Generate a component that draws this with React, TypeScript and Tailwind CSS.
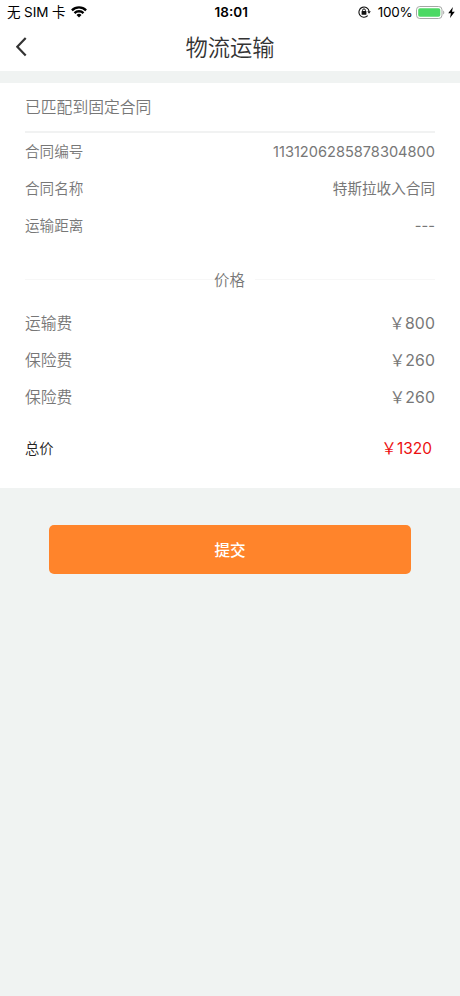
import React from "react";

type RowProps = { label: string; value: string };

const YEN = "\uFFE5";

function DetailRow({ label, value }: RowProps) {
  return (
    <div className="flex h-[36.8px] items-center justify-between text-[14.6px] whitespace-nowrap">
      <span>{label}</span>
      <span className="font-normal">{value}</span>
    </div>
  );
}

function PriceRow({ label, value }: RowProps) {
  return (
    <div className="flex h-[36.8px] items-center justify-between text-[15.8px] whitespace-nowrap">
      <span>{label}</span>
      <span className="font-normal tracking-[0.1px]">{YEN}{value}</span>
    </div>
  );
}

function WifiIcon() {
  return (
    <svg className="ml-[6px] h-[12px] w-[16px]" viewBox="0 0 16 12" fill="none" stroke="#000" strokeWidth="2.4">
      <path d="M.9 4.3a10.2 10.2 0 0 1 14.2 0" />
      <path d="M3.5 7.1a6.5 6.5 0 0 1 9 0" />
      <path d="M8 11.5 5.5 9a3.6 3.6 0 0 1 5 0Z" fill="#000" stroke="none" />
    </svg>
  );
}

function RotationLockIcon() {
  return (
    <svg className="h-[12px] w-[13px]" viewBox="0 0 13 12" fill="none" stroke="#111">
      <path d="M9.7 9.7A5.1 5.1 0 1 1 11.1 5.4" strokeWidth="1.1" />
      <path d="M9.3 5.3h3.5L11 7.7Z" fill="#111" stroke="none" />
      <rect x="3.6" y="5.1" width="4.8" height="3.7" rx=".5" fill="#111" stroke="none" />
      <path d="M4.6 5.4V4.3a1.4 1.4 0 0 1 2.8 0v1.1" strokeWidth="1" />
    </svg>
  );
}

function BatteryIcon() {
  return (
    <svg className="ml-[3px] h-[13px] w-[29px]" viewBox="0 0 29 13" fill="none">
      <rect x=".5" y=".5" width="25.5" height="12" rx="3.3" stroke="#a5a8a5" />
      <rect x="2.2" y="2.2" width="22.1" height="8.6" rx="1.8" fill="#4cd964" />
      <path d="M27.2 4.5c1.5.5 1.5 3.5 0 4Z" fill="#a5a8a5" />
    </svg>
  );
}

function StatusBar() {
  return (
    <header className="grid h-6 grid-cols-[1fr_60px_1fr] items-center pr-[5.5px] pl-[7px] text-[13.5px] text-black">
      <div className="flex items-center whitespace-nowrap">
        <span className="tracking-[-0.1px]">无 SIM 卡</span>
        <WifiIcon />
      </div>
      <span className="pl-px text-center font-semibold">18:01</span>
      <div className="flex items-center justify-end whitespace-nowrap">
        <RotationLockIcon />
        <span className="ml-[7px] tracking-[-0.25px]">100%</span>
        <BatteryIcon />
        <svg className="ml-[3px] h-[11px] w-[7px]" viewBox="0 0 7 11" fill="#000">
          <path d="M4.9 0 .2 6.2h2.7L2 11l4.8-6.3H4Z" />
        </svg>
      </div>
    </header>
  );
}

export default function App() {
  return (
    <div className="flex h-[996px] w-[460px] flex-col overflow-hidden bg-[#f0f3f2] font-['Inter','Noto_Sans_CJK_SC',sans-serif] text-[#777]">
      <div className="h-[71px] bg-white">
        <StatusBar />
        <nav className="grid h-[46px] grid-cols-[60px_1fr_60px] items-center text-[#333]">
          <svg className="ml-4 h-[20px] w-[11px]" viewBox="0 0 11 20" fill="none" stroke="#333" strokeWidth="2.2">
            <path d="m9.7 1.1-8.4 8.7 8.4 8.7" />
          </svg>
          <h1 className="pt-[2px] text-center text-[22.3px] leading-none font-[350]">物流运输</h1>
        </nav>
      </div>
      <main className="mt-3 h-[405px] bg-white px-[25px] font-[350]">
        <h2 className="flex h-[50px] items-center border-b-2 border-[#f1f2f2] pt-[2px] text-[15.8px]">已匹配到固定合同</h2>
        <div className="pt-[1.5px]">
          <DetailRow label="合同编号" value="1131206285878304800" />
          <DetailRow label="合同名称" value="特斯拉收入合同" />
          <DetailRow label="运输距离" value="---" />
        </div>
        <div className="mt-[22.5px] flex h-[25px] items-center text-[15.4px]">
          <div className="h-px w-[189px] bg-[#f7f7f7]" />
          <span className="w-[41px] pt-[2px] whitespace-nowrap">价格</span>
          <div className="h-px flex-1 bg-[#f7f7f7]" />
        </div>
        <div className="mt-[13px]">
          <PriceRow label="运输费" value="800" />
          <PriceRow label="保险费" value="260" />
          <PriceRow label="保险费" value="260" />
        </div>
        <div className="mt-[14px] flex h-[37px] items-center justify-between pr-[3px]">
          <span className="text-[14.3px] text-[#222]">总价</span>
          <span className="text-[15.5px] font-normal text-[#ec1010]">{YEN}1320</span>
        </div>
      </main>
      <button className="mx-[49px] mt-[37px] h-[49px] rounded-[5px] bg-[#ff842b] pt-[2px] text-[15.6px] font-medium text-white">提交</button>
    </div>
  );
}
